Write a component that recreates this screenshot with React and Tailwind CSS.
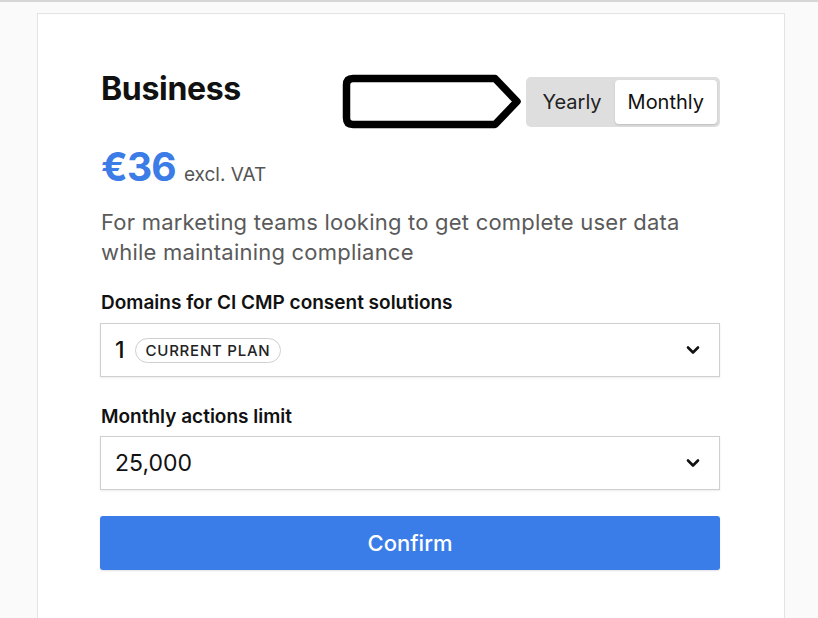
const Chevron = () => (
  <svg width="14" height="10" viewBox="0 0 14 10" className="shrink-0">
    <path d="M2 2.5 L7 7.5 L12 2.5" fill="none" stroke="#111" strokeWidth="2.6" strokeLinecap="round" strokeLinejoin="round" />
  </svg>
);

const Tag = () => (
  <svg width="184" height="60" viewBox="0 0 184 60" className="shrink-0">
    <path
      d="M13 6.5 L155 6.5 L177 29.5 L155 52.5 L13 52.5 Q6.5 52.5 6.5 46 L6.5 13 Q6.5 6.5 13 6.5 Z"
      fill="#fff"
      stroke="#000"
      strokeWidth="7.5"
      strokeLinejoin="round"
    />
  </svg>
);

const Select = ({ children }) => (
  <div className="flex h-[54px] items-center justify-between border border-[#cfcfcf] bg-white pl-[14px] pr-[19px] shadow-[0_1px_2px_rgba(0,0,0,0.08)]">
    <div className="flex items-center gap-[10px]">{children}</div>
    <Chevron />
  </div>
);

export default function App() {
  return (
    <div
      className="h-[618px] overflow-hidden border-t-2 border-[#d6d6d6] bg-[#fafafa]"
      style={{ fontFamily: "Inter, 'Noto Sans', sans-serif" }}
    >
      <div className="ml-[37px] mt-[11px] min-h-[700px] w-[748px] border border-[#e3e3e3] bg-white pl-[62px] pr-[64px] pt-[55px]">
        <div className="flex items-start justify-between">
          <h2 className="ml-[1px] text-[32px] font-bold leading-[40px] tracking-[-0.01em] text-[#111]">Business</h2>
          <div className="flex items-start">
            <div className="mt-[3px]">
              <Tag />
            </div>
            <div className="ml-[2px] mt-[8px] flex rounded-[5px] bg-[#dedede] p-[3px]">
              <button className="h-[44px] px-[13px] text-[20px] text-[#222]">Yearly</button>
              <button className="h-[44px] rounded-[4px] bg-white px-[13px] text-[20px] text-[#111] shadow-[0_1px_2px_rgba(0,0,0,0.15)]">
                Monthly
              </button>
            </div>
          </div>
        </div>

        <div className="ml-[1px] mt-[11px] flex items-baseline">
          <span className="text-[39px] font-bold leading-[48px] tracking-[-0.02em] text-[#3b7ce6]">€36</span>
          <span className="ml-[8px] text-[19px] text-[#555]">excl. VAT</span>
        </div>

        <p className="ml-[1px] mt-[16px] text-[22px] leading-[30px] tracking-[0.01em] text-[#5a5a5a]">
          For marketing teams looking to get complete user data while maintaining compliance
        </p>

        <label className="ml-[1px] mt-[24px] block text-[19px] font-semibold leading-[24px] text-[#111]">
          Domains for CI CMP consent solutions
        </label>
        <div className="mt-[8px]">
          <Select>
            <span className="text-[23px] font-medium text-[#111]">1</span>
            <span className="rounded-full border border-[#cfcfcf] px-[10px] py-[2px] text-[15px] font-medium uppercase leading-[19px] tracking-[0.05em] text-[#222]">
              Current plan
            </span>
          </Select>
        </div>

        <label className="ml-[1px] mt-[28px] block text-[19px] font-semibold leading-[24px] text-[#111]">
          Monthly actions limit
        </label>
        <div className="mt-[7px]">
          <Select>
            <span className="text-[23px] text-[#111]">25,000</span>
          </Select>
        </div>

        <button className="mt-[26px] h-[54px] w-full rounded-[3px] bg-[#3a7ce8] text-[22px] font-medium text-white shadow-[0_1px_2px_rgba(0,0,0,0.12)]">
          Confirm
        </button>
      </div>
    </div>
  );
}
